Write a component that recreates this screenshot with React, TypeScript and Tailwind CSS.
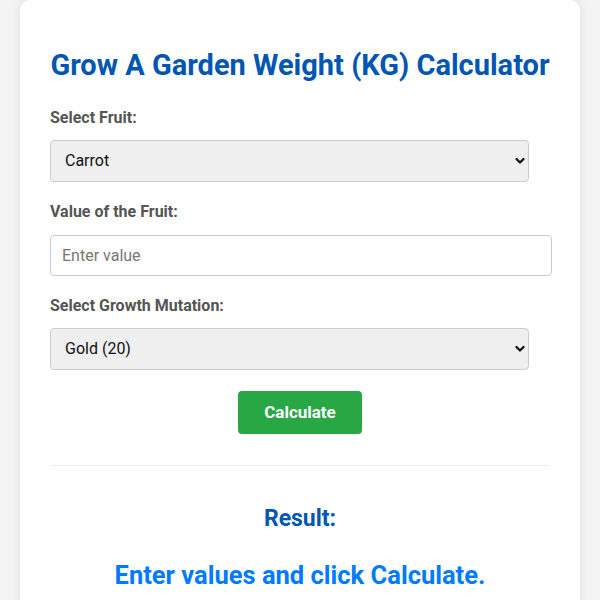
import { useState } from "react";

const fruits = ["Carrot", "Strawberry", "Blueberry", "Tomato", "Corn", "Watermelon"];
const mutations = [
    { name: "Gold", value: 20 },
    { name: "Rainbow", value: 50 },
    { name: "Wet", value: 2 },
    { name: "Shocked", value: 100 },
];

function Chevron() {
    return (
        <svg
            className="pointer-events-none absolute right-[4px] top-1/2 -translate-y-1/2"
            width="10"
            height="8"
            viewBox="0 0 10 8"
            fill="none"
        >
            <path d="M1.5 2 L5 5.5 L8.5 2" stroke="#111" strokeWidth="2.2" strokeLinecap="round" strokeLinejoin="round" />
        </svg>
    );
}

export default function App() {
    const [fruit, setFruit] = useState("Carrot");
    const [value, setValue] = useState("");
    const [mutation, setMutation] = useState("20");
    const [result, setResult] = useState<string | null>(null);

    function calculate() {
        const v = parseFloat(value);
        if (isNaN(v)) {
            setResult(null);
            return;
        }
        setResult(`${(v / Number(mutation)).toFixed(2)} KG`);
    }

    return (
        <div className="min-h-screen bg-[#f4f4f4] px-[20px] font-['Roboto',sans-serif]">
            <div className="rounded-[10px] bg-white px-[30px] pt-[48px] pb-[30px] shadow-[0_0_10px_rgba(0,0,0,0.1)]">
                <h1 className="mb-[26px] text-center text-[29px] font-bold leading-[34px] text-[#0056b3]">
                    Grow A Garden Weight (KG) Calculator
                </h1>

                <label className="mb-[12px] block text-[16px] font-bold leading-[20px] text-[#555]">Select Fruit:</label>
                <div className="relative w-[479px]">
                    <select
                        value={fruit}
                        onChange={(e) => setFruit(e.target.value)}
                        className="h-[42px] w-full appearance-none rounded-[4px] border border-[#ccc] bg-[#efefef] pl-[14px] text-[16px] text-[#111] outline-none"
                    >
                        {fruits.map((f) => (
                            <option key={f}>{f}</option>
                        ))}
                    </select>
                    <Chevron />
                </div>

                <label className="mt-[20px] mb-[13px] block text-[16px] font-bold leading-[20px] text-[#555]">
                    Value of the Fruit:
                </label>
                <input
                    type="number"
                    value={value}
                    onChange={(e) => setValue(e.target.value)}
                    placeholder="Enter value"
                    className="h-[41px] w-[502px] rounded-[4px] border border-[#ccc] bg-white px-[11px] text-[16px] text-[#111] outline-none placeholder:text-[#777]"
                />

                <label className="mt-[20px] mb-[12px] block text-[16px] font-bold leading-[20px] text-[#555]">
                    Select Growth Mutation:
                </label>
                <div className="relative w-[479px]">
                    <select
                        value={mutation}
                        onChange={(e) => setMutation(e.target.value)}
                        className="h-[42px] w-full appearance-none rounded-[4px] border border-[#ccc] bg-[#efefef] pl-[14px] text-[16px] text-[#111] outline-none"
                    >
                        {mutations.map((m) => (
                            <option key={m.name} value={m.value}>
                                {m.name} ({m.value})
                            </option>
                        ))}
                    </select>
                    <Chevron />
                </div>

                <div className="mt-[21px] flex justify-center">
                    <button
                        onClick={calculate}
                        className="h-[43px] w-[124px] rounded-[4px] bg-[#28a745] text-[17px] font-bold text-white"
                    >
                        Calculate
                    </button>
                </div>

                <div className="mt-[31px] border-t border-[#eee]" />

                <h2 className="mt-[39px] text-center text-[23px] font-bold leading-[28px] text-[#0056b3]">Result:</h2>
                <p className="mt-[27px] text-center text-[25.5px] font-bold leading-[30px] text-[#007bff]">
                    {result ?? "Enter values and click Calculate."}
                </p>
            </div>
        </div>
    );
}
